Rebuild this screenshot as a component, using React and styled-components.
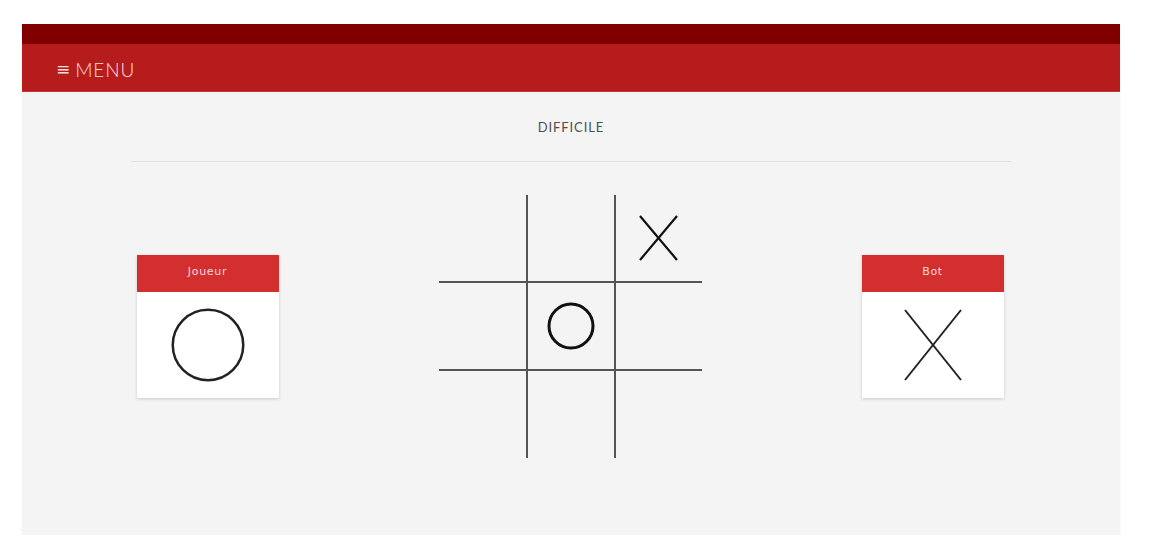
import React from "react";
import styled, { createGlobalStyle } from "styled-components";

const GlobalStyle = createGlobalStyle`
  html, body {
    margin: 0;
    padding: 0;
    background: #ffffff;
  }
  body {
    font-family: "Lato", "Liberation Sans", sans-serif;
  }
`;

const Frame = styled.div`
  margin: 24px 35px 0 22px;
  height: 511px;
  display: flex;
  flex-direction: column;
  background: #f4f4f4;
  box-shadow: 0 1px 2px rgba(0, 0, 0, 0.06);
`;

const TopStrip = styled.div`
  height: 20px;
  background: #800000;
`;

const NavBar = styled.nav`
  height: 47px;
  display: flex;
  align-items: center;
  padding: 3px 0 0 34px;
  box-sizing: border-box;
  height: 48px;
  background: #b71c1c;
  border-bottom: 1px solid #c9343a;
`;

const MenuButton = styled.button`
  display: flex;
  align-items: center;
  gap: 4px;
  padding: 0;
  border: none;
  background: none;
  color: #f8dede;
  font-family: "Lato", "Liberation Sans", sans-serif;
  font-weight: 300;
  font-size: 19px;
  letter-spacing: 0.9px;
  cursor: pointer;

  span {
    font-family: "DejaVu Sans", sans-serif;
    font-size: 17px;
    font-weight: 400;
    margin-top: -1px;
  }
`;

const Content = styled.main`
  flex: 1;
  display: flex;
  flex-direction: column;
`;

const Level = styled.div`
  height: 70px;
  margin: 0 109px;
  display: flex;
  align-items: center;
  justify-content: center;
  padding-top: 1px;
  box-sizing: border-box;
  border-bottom: 1px solid #dfdfdf;
  color: #4f4f4f;
  font-size: 13px;
  letter-spacing: 0.9px;
`;

const Arena = styled.section`
  display: flex;
  align-items: center;
  justify-content: center;
  gap: 160px;
  padding: 33px 2px 0 0;
`;

const Card = styled.div`
  width: 142px;
  background: #fff;
  box-shadow: 0 1px 3px rgba(0, 0, 0, 0.18);
`;

const CardHead = styled.div`
  height: 37px;
  display: flex;
  align-items: center;
  justify-content: center;
  background: #d32f2f;
  color: #f6dcdc;
  font-family: "DejaVu Sans", sans-serif;
  font-size: 11px;
  letter-spacing: 0.7px;
  padding-bottom: 4px;
  box-sizing: border-box;
`;

const CardBody = styled.div`
  height: 106px;
  display: flex;
  align-items: center;
  justify-content: center;
`;

const Board = styled.div`
  display: grid;
  grid-template-columns: 89px 88px 86px;
  grid-template-rows: 88px 88px 87px;
`;

const Cell = styled.div`
  box-sizing: border-box;
  display: flex;
  align-items: center;
  justify-content: center;
  border-right: ${({ $right }) => ($right ? "2px solid #555" : "none")};
  border-bottom: ${({ $bottom }) => ($bottom ? "2px solid #555" : "none")};
`;

const Cross = ({ w, h, stroke = 2, color = "#111" }) => (
  <svg width={w} height={h} viewBox={`0 0 ${w} ${h}`}>
    <line x1="1" y1="1" x2={w - 1} y2={h - 1} stroke={color} strokeWidth={stroke} />
    <line x1={w - 1} y1="1" x2="1" y2={h - 1} stroke={color} strokeWidth={stroke} />
  </svg>
);

const Ring = ({ size, stroke = 2.5, color = "#111" }) => (
  <svg width={size} height={size} viewBox={`0 0 ${size} ${size}`}>
    <circle
      cx={size / 2}
      cy={size / 2}
      r={size / 2 - stroke / 2 - 0.5}
      fill="none"
      stroke={color}
      strokeWidth={stroke}
    />
  </svg>
);

const cells = [null, null, "X", null, "O", null, null, null, null];

const App = () => {
  return (
    <>
      <GlobalStyle />
      <Frame>
        <TopStrip />
        <NavBar>
          <MenuButton>
            <span>≡</span>MENU
          </MenuButton>
        </NavBar>
        <Content>
          <Level>DIFFICILE</Level>
          <Arena>
            <Card>
              <CardHead>Joueur</CardHead>
              <CardBody>
                <Ring size={74} stroke={2.5} color="#222" />
              </CardBody>
            </Card>

            <Board>
              {cells.map((v, i) => (
                <Cell key={i} $right={i % 3 < 2} $bottom={i < 6}>
                  {v === "X" && <Cross w={39} h={46} stroke={2.2} />}
                  {v === "O" && <Ring size={48} stroke={3} />}
                </Cell>
              ))}
            </Board>

            <Card>
              <CardHead>Bot</CardHead>
              <CardBody>
                <Cross w={58} h={72} stroke={2} color="#222" />
              </CardBody>
            </Card>
          </Arena>
        </Content>
      </Frame>
    </>
  );
};

export default App;
